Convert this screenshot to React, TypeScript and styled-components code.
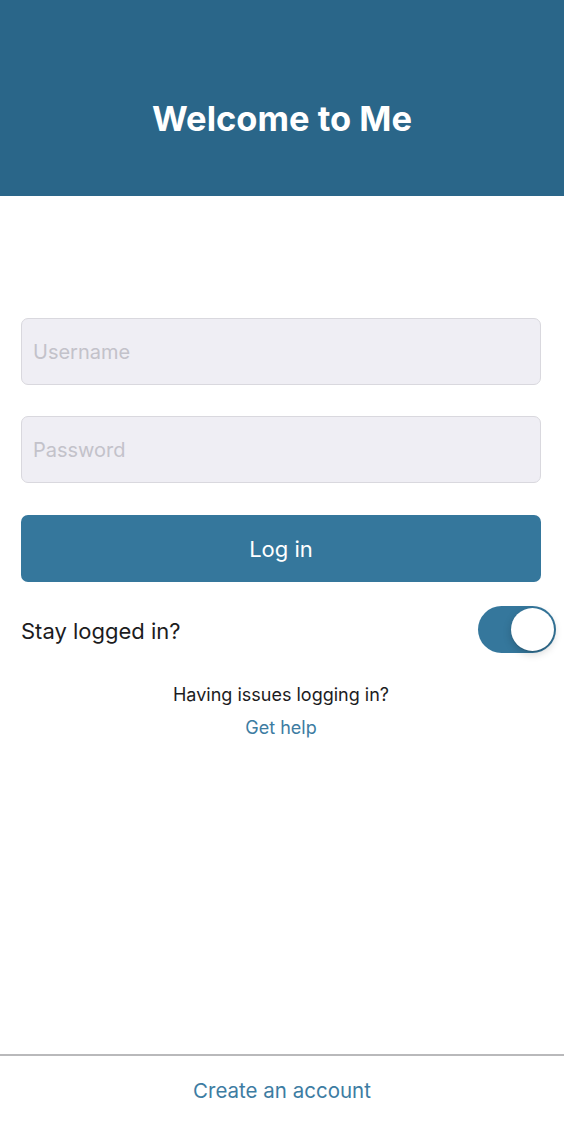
import * as React from 'react';
import styled, { createGlobalStyle } from 'styled-components';

const GlobalStyle = createGlobalStyle`
  html, body, #root {
    height: 100%;
  }
  body {
    margin: 0;
    background: #ffffff;
    font-family: Inter, "Noto Sans", "Liberation Sans", sans-serif;
    color: #1c1c1e;
  }
  * {
    box-sizing: border-box;
  }
`;

const Screen = styled.div`
  display: flex;
  flex-direction: column;
  min-height: 100%;
`;

const Header = styled.header`
  height: 196px;
  padding-top: 40px;
  background-color: #2a6689;
  display: flex;
  align-items: center;
  justify-content: center;
`;

const Title = styled.h1`
  margin: 0;
  color: #ffffff;
  font-size: 34.5px;
  font-weight: 700;
`;

const Form = styled.main`
  flex: 1;
  display: flex;
  flex-direction: column;
  padding: 122px 23px 0 21px;
`;

const Field = styled.input`
  height: 67px;
  width: 100%;
  margin-bottom: 31px;
  padding: 0 11px;
  border: 1px solid #d9d8de;
  border-radius: 7px;
  background-color: #efeef4;
  font-family: inherit;
  font-size: 20px;
  color: #1c1c1e;
  outline: none;

  &::placeholder {
    color: #c3c2ca;
  }
`;

const LoginButton = styled.button`
  height: 67px;
  width: 100%;
  margin-top: 1px;
  border: none;
  border-radius: 7px;
  background-color: #35779c;
  color: #ffffff;
  font-family: inherit;
  font-size: 22px;
  cursor: pointer;
`;

const StayRow = styled.div`
  display: flex;
  align-items: center;
  justify-content: space-between;
  margin: 24px -15px 0 0;
`;

const StayLabel = styled.span`
  font-size: 22px;
  padding-top: 2px;
`;

const Toggle = styled.button<{ $on: boolean }>`
  position: relative;
  width: 78px;
  height: 47px;
  padding: 0;
  border: none;
  border-radius: 24px;
  background-color: ${(p) => (p.$on ? '#35779c' : '#e5e5ea')};
  cursor: pointer;
`;

const Knob = styled.span<{ $on: boolean }>`
  position: absolute;
  top: 2px;
  left: ${(p) => (p.$on ? '33px' : '2px')};
  width: 43px;
  height: 43px;
  border-radius: 50%;
  background: #ffffff;
  box-shadow: 0 3px 8px rgba(0, 0, 0, 0.18), 0 1px 1px rgba(0, 0, 0, 0.12);
`;

const Help = styled.div`
  display: flex;
  flex-direction: column;
  align-items: center;
  gap: 12px;
  margin-top: 31px;
`;

const HelpText = styled.span`
  font-size: 18px;
`;

const LinkText = styled.a<{ $size?: number }>`
  color: #3d7ca2;
  font-size: ${(p) => p.$size ?? 18}px;
  text-decoration: none;
  cursor: pointer;
`;

const Footer = styled.footer`
  height: 68px;
  padding-top: 3px;
  border-top: 2px solid #b9b9bb;
  display: flex;
  align-items: center;
  justify-content: center;
`;

export default function App() {
  const [stay, setStay] = React.useState(true);

  return (
    <Screen>
      <GlobalStyle />
      <Header>
        <Title>Welcome to Me</Title>
      </Header>
      <Form>
        <Field placeholder="Username" />
        <Field placeholder="Password" type="password" />
        <LoginButton>Log in</LoginButton>
        <StayRow>
          <StayLabel>Stay logged in?</StayLabel>
          <Toggle $on={stay} onClick={() => setStay(!stay)}>
            <Knob $on={stay} />
          </Toggle>
        </StayRow>
        <Help>
          <HelpText>Having issues logging in?</HelpText>
          <LinkText>Get help</LinkText>
        </Help>
      </Form>
      <Footer>
        <LinkText $size={20.5}>Create an account</LinkText>
      </Footer>
    </Screen>
  );
}
